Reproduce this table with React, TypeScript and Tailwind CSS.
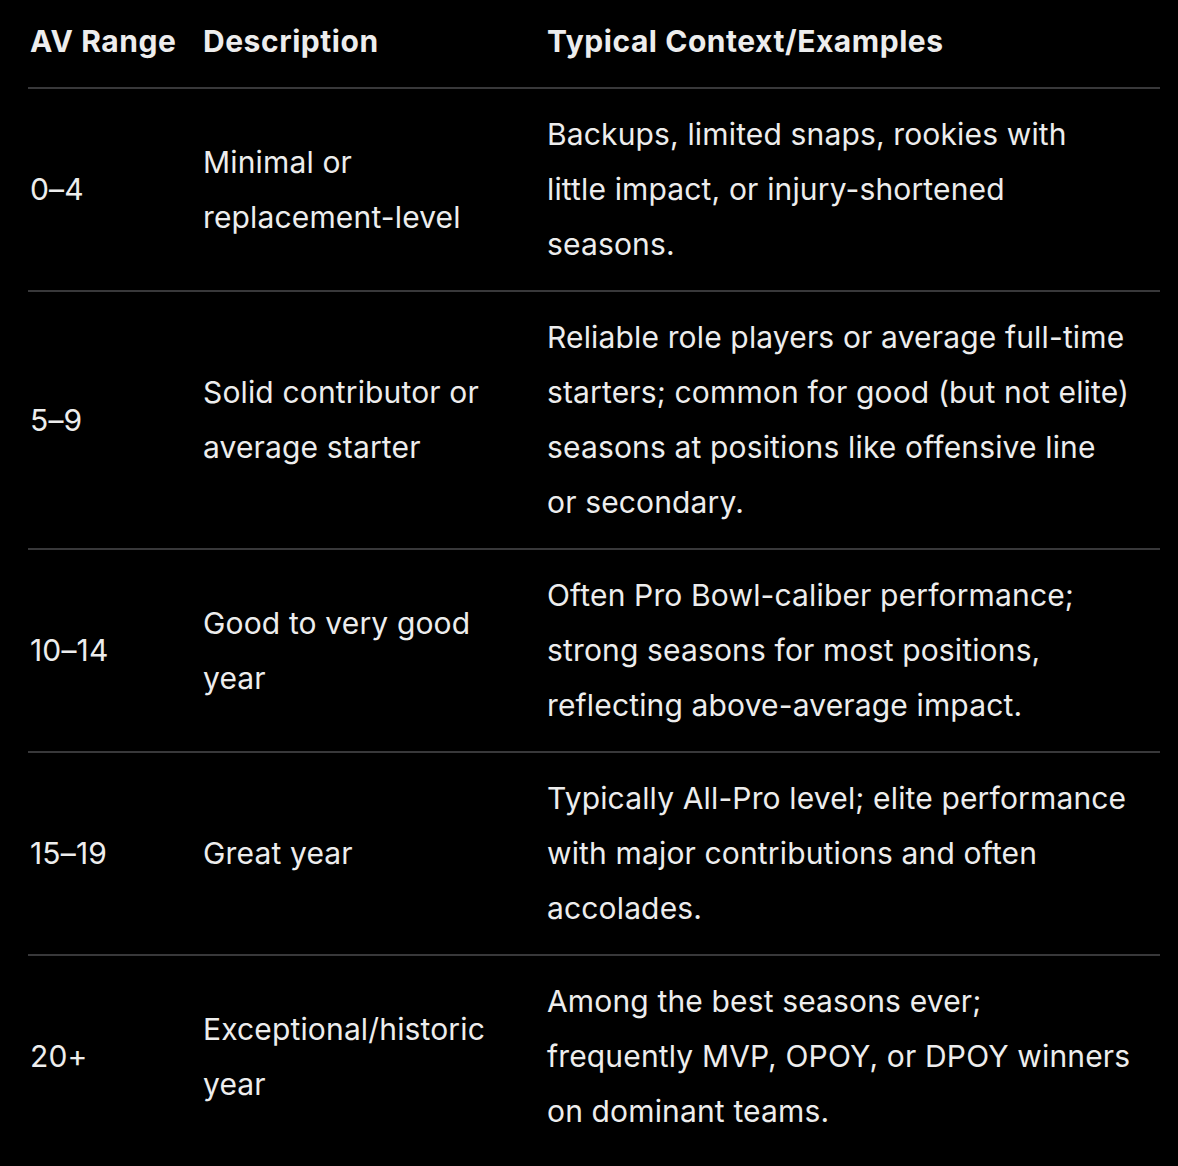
import React from 'react';

type Row = {
    range: string;
    desc: string[];
    context: string[];
};

const rows: Row[] = [
    {
        range: '0–4',
        desc: ['Minimal or', 'replacement-level'],
        context: ['Backups, limited snaps, rookies with', 'little impact, or injury-shortened', 'seasons.'],
    },
    {
        range: '5–9',
        desc: ['Solid contributor or', 'average starter'],
        context: [
            'Reliable role players or average full-time',
            'starters; common for good (but not elite)',
            'seasons at positions like offensive line',
            'or secondary.',
        ],
    },
    {
        range: '10–14',
        desc: ['Good to very good', 'year'],
        context: ['Often Pro Bowl-caliber performance;', 'strong seasons for most positions,', 'reflecting above-average impact.'],
    },
    {
        range: '15–19',
        desc: ['Great year'],
        context: ['Typically All-Pro level; elite performance', 'with major contributions and often', 'accolades.'],
    },
    {
        range: '20+',
        desc: ['Exceptional/historic', 'year'],
        context: ['Among the best seasons ever;', 'frequently MVP, OPOY, or DPOY winners', 'on dominant teams.'],
    },
];

const Lines: React.FC<{ lines: string[] }> = ({ lines }) => (
    <>
        {lines.map((l) => (
            <span key={l} className="block whitespace-nowrap">
                {l}
            </span>
        ))}
    </>
);

export default function App() {
    return (
        <div
            className="min-h-screen w-full bg-black text-[#ededed] px-[28px]"
            style={{ fontFamily: 'Inter, "Noto Sans", sans-serif' }}
        >
            <table className="w-[1132px] border-collapse text-[30px] leading-[55px] tracking-[0.005em]">
                <thead>
                    <tr className="border-b-2 border-[#38383a] tracking-[0.018em]">
                        <th className="w-[173px] pt-[14px] pb-[18px] pl-[2px] text-left font-bold">AV Range</th>
                        <th className="w-[344px] pt-[14px] pb-[18px] pl-[2px] text-left font-bold">Description</th>
                        <th className="pt-[14px] pb-[18px] pl-[2px] text-left font-bold">Typical Context/Examples</th>
                    </tr>
                </thead>
                <tbody>
                    {rows.map((r, i) => (
                        <tr key={r.range} className={i < rows.length - 1 ? 'border-b-2 border-[#38383a]' : ''}>
                            <td className="py-[18px] pl-[2px] align-middle">{r.range}</td>
                            <td className="py-[18px] pl-[2px] align-middle">
                                <Lines lines={r.desc} />
                            </td>
                            <td className="py-[18px] pl-[2px] align-middle">
                                <Lines lines={r.context} />
                            </td>
                        </tr>
                    ))}
                </tbody>
            </table>
        </div>
    );
}
